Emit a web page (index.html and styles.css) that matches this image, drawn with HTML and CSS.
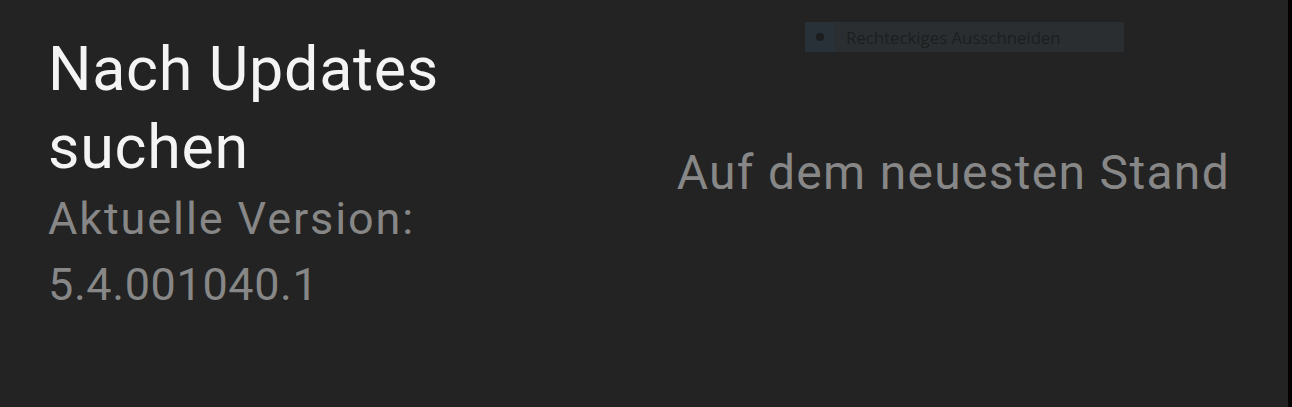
FILE: index.html
```html
<!DOCTYPE html>
<html lang="de">
<head>
    <meta charset="UTF-8">
    <meta name="viewport" content="width=device-width, initial-scale=1.0">
    <title>Nach Updates suchen</title>
    <link rel="stylesheet" href="styles.css">
</head>
<body>
    <div class="screen">
        <div class="snip-bar">
            <span class="snip-mode"><span class="snip-dot"></span></span>
            <span class="snip-label">Rechteckiges Ausschneiden</span>
        </div>

        <div class="update-row">
            <div class="update-info">
                <h1 class="update-title">Nach Updates suchen</h1>
                <p class="update-version">Aktuelle Version: <span class="version-number">5.4.001040.1</span></p>
            </div>
            <div class="update-status">Auf dem neuesten Stand</div>
        </div>
    </div>
</body>
</html>
```

FILE: styles.css
```css
html, body {
    margin: 0;
    padding: 0;
    background-color: #000;
}

body {
    font-family: Roboto, "Noto Sans", sans-serif;
}

.screen {
    position: relative;
    width: 1288px;
    height: 407px;
    background-color: #232323;
    overflow: hidden;
}

/* snipping tool overlay */
.snip-bar {
    position: absolute;
    left: 805px;
    top: 22px;
    width: 319px;
    height: 30px;
    display: flex;
    align-items: center;
    background-color: #2a2e31;
}

.snip-mode {
    width: 30px;
    height: 30px;
    display: flex;
    align-items: center;
    justify-content: center;
    background-color: #283038;
}

.snip-dot {
    width: 8px;
    height: 8px;
    border-radius: 50%;
    background-color: #1b1d1f;
}

.snip-label {
    margin-left: 11px;
    font-family: "Open Sans", "Noto Sans", sans-serif;
    font-size: 16.8px;
    color: #1c1e20;
}

.update-row {
    display: flex;
    align-items: center;
    justify-content: space-between;
    padding: 30px 58px 0 48px;
}

.update-info {
    width: 440px;
}

.update-title {
    margin: 0;
    font-size: 61px;
    font-weight: 400;
    line-height: 78px;
    letter-spacing: 0.7px;
    color: #f4f4f4;
}

.update-version {
    margin: 0;
    font-size: 45px;
    line-height: 66px;
    letter-spacing: 1.9px;
    color: #878787;
}

.version-number {
    letter-spacing: 0.6px;
}

.update-status {
    margin-top: -4px;
    font-size: 48px;
    letter-spacing: 1.3px;
    color: #878787;
}
```
